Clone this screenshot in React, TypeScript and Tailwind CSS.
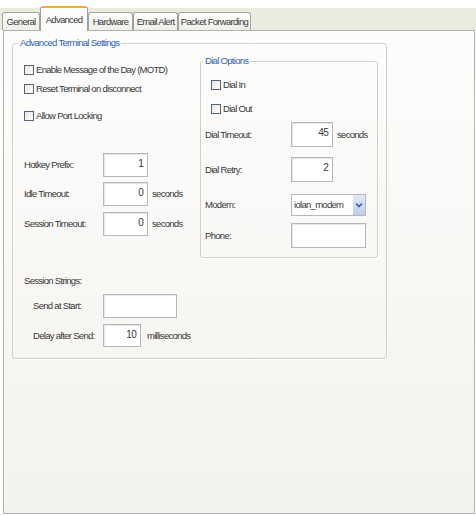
import React from 'react';

const tabs = [
  { label: 'General', cls: 'w-[38px]' },
  { label: 'Advanced', cls: 'w-[48px]', active: true },
  { label: 'Hardware', cls: 'w-[45px]' },
  { label: 'Email Alert', cls: 'w-[45px]' },
  { label: 'Packet Forwarding', cls: 'w-[73px]' },
];

function Check({ label, className = '' }: { label: string; className?: string }) {
  return (
    <div className={`flex items-center gap-[2px] h-[14px] ${className}`}>
      <span className="w-[10px] h-[10px] border border-[#56647a] bg-gradient-to-br from-[#e8e8e4] to-white" />
      <span>{label}</span>
    </div>
  );
}

function Box({ value, className }: { value?: string; className: string }) {
  return (
    <div
      className={`h-full bg-white border border-[#b4b7bc] shadow-[inset_1px_1px_0_#e6e7ea] flex justify-end pt-[4px] pr-[4px] text-[10px] ${className}`}
    >
      {value}
    </div>
  );
}

export default function App() {
  return (
    <div className="w-[476px] h-[515px] bg-white flex flex-col font-['Liberation_Sans',Arial,sans-serif] text-[9.5px] leading-[12px] tracking-[-0.7px] text-[#383838]">
      {/* Tab strip */}
      <div className="flex items-end h-[30px] pl-[2px] bg-[linear-gradient(to_bottom,#ffffff_8px,#ecebe0_8px)]">
        {tabs.map((t) =>
          t.active ? (
            <div
              key={t.label}
              className={`${t.cls} relative z-10 -mb-px h-[25px] flex items-center justify-center rounded-t-[3px] border border-b-0 border-[#a3a29b] border-t-2 border-t-[#f2a93b] bg-[#fcfcfc]`}
            >
              {t.label}
            </div>
          ) : (
            <div
              key={t.label}
              className={`${t.cls} h-[18px] flex items-center justify-center rounded-t-[3px] border border-b-0 border-[#a3a29b] bg-gradient-to-b from-white to-[#efeee8]`}
            >
              {t.label}
            </div>
          )
        )}
      </div>

      {/* Tab panel */}
      <div className="flex-1 ml-[3px] mr-[1px] mb-[1px] border border-[#b3b2ab] bg-gradient-to-b from-[#fdfdfd] to-[#f4f2ed] pt-[6px] pl-[8px]">
        <fieldset className="w-[374px] rounded-[3px] border border-[#d2d0c8] shadow-[1px_1px_0_#ffffff] pl-[11px] pr-[8px] pb-[11px]">
          <legend className="-ml-[6px] px-[2px] text-[#2f5ec4]">Advanced Terminal Settings</legend>

          <div className="flex">
            {/* Left column */}
            <div className="w-[176px] flex flex-col">
              <Check label="Enable Message of the Day (MOTD)" className="mt-[14px]" />
              <Check label="Reset Terminal on disconnect" className="mt-[5px]" />
              <Check label="Allow Port Locking" className="mt-[13px]" />

              <div className="flex items-center h-[24px] mt-[30px]">
                <span className="w-[79px]">Hotkey Prefix:</span>
                <Box value="1" className="w-[45px]" />
              </div>
              <div className="flex items-center h-[24px] mt-[5px]">
                <span className="w-[79px]">Idle Timeout:</span>
                <Box value="0" className="w-[45px]" />
                <span className="ml-[4px]">seconds</span>
              </div>
              <div className="flex items-center h-[24px] mt-[6px]">
                <span className="w-[79px]">Session Timeout:</span>
                <Box value="0" className="w-[45px]" />
                <span className="ml-[4px]">seconds</span>
              </div>
            </div>

            {/* Dial Options */}
            <fieldset className="w-[178px] mt-[6px] rounded-[3px] border border-[#d2d0c8] shadow-[1px_1px_0_#ffffff] pl-[4px] pb-[9px]">
              <legend className="-ml-[2px] px-[2px] text-[#2f5ec4]">Dial Options</legend>
              <Check label="Dial In" className="mt-[11px] ml-[6px]" />
              <Check label="Dial Out" className="mt-[10px] ml-[6px]" />
              <div className="flex items-center h-[25px] mt-[6px]">
                <span className="w-[86px]">Dial Timeout:</span>
                <Box value="45" className="w-[42px]" />
                <span className="ml-[4px]">seconds</span>
              </div>
              <div className="flex items-center h-[25px] mt-[10px]">
                <span className="w-[86px]">Dial Retry:</span>
                <Box value="2" className="w-[42px]" />
              </div>
              <div className="flex items-center h-[22px] mt-[12px]">
                <span className="w-[86px]">Modem:</span>
                <div className="flex h-full w-[75px] border border-[#b4b7bc] bg-white">
                  <span className="flex-1 flex items-center pl-[2px]">iolan_modem</span>
                  <span className="w-[12px] flex items-center justify-center bg-gradient-to-b from-[#e2eaf8] to-[#bccdec]">
                    <svg width="8" height="6" viewBox="0 0 8 6">
                      <path d="M1 1.5 L4 4.5 L7 1.5" fill="none" stroke="#3558c2" strokeWidth="1.6" />
                    </svg>
                  </span>
                </div>
              </div>
              <div className="flex items-center h-[25px] mt-[7px]">
                <span className="w-[86px]">Phone:</span>
                <Box className="w-[75px]" />
              </div>
            </fieldset>
          </div>

          {/* Session strings */}
          <div className="mt-[17px]">Session Strings:</div>
          <div className="flex items-center h-[24px] mt-[7px] pl-[9px]">
            <span className="w-[70px]">Send at Start:</span>
            <Box className="w-[74px]" />
          </div>
          <div className="flex items-center h-[23px] mt-[6px] pl-[9px]">
            <span className="w-[70px]">Delay after Send:</span>
            <Box value="10" className="w-[38px]" />
            <span className="ml-[6px]">milliseconds</span>
          </div>
        </fieldset>
      </div>
    </div>
  );
}
